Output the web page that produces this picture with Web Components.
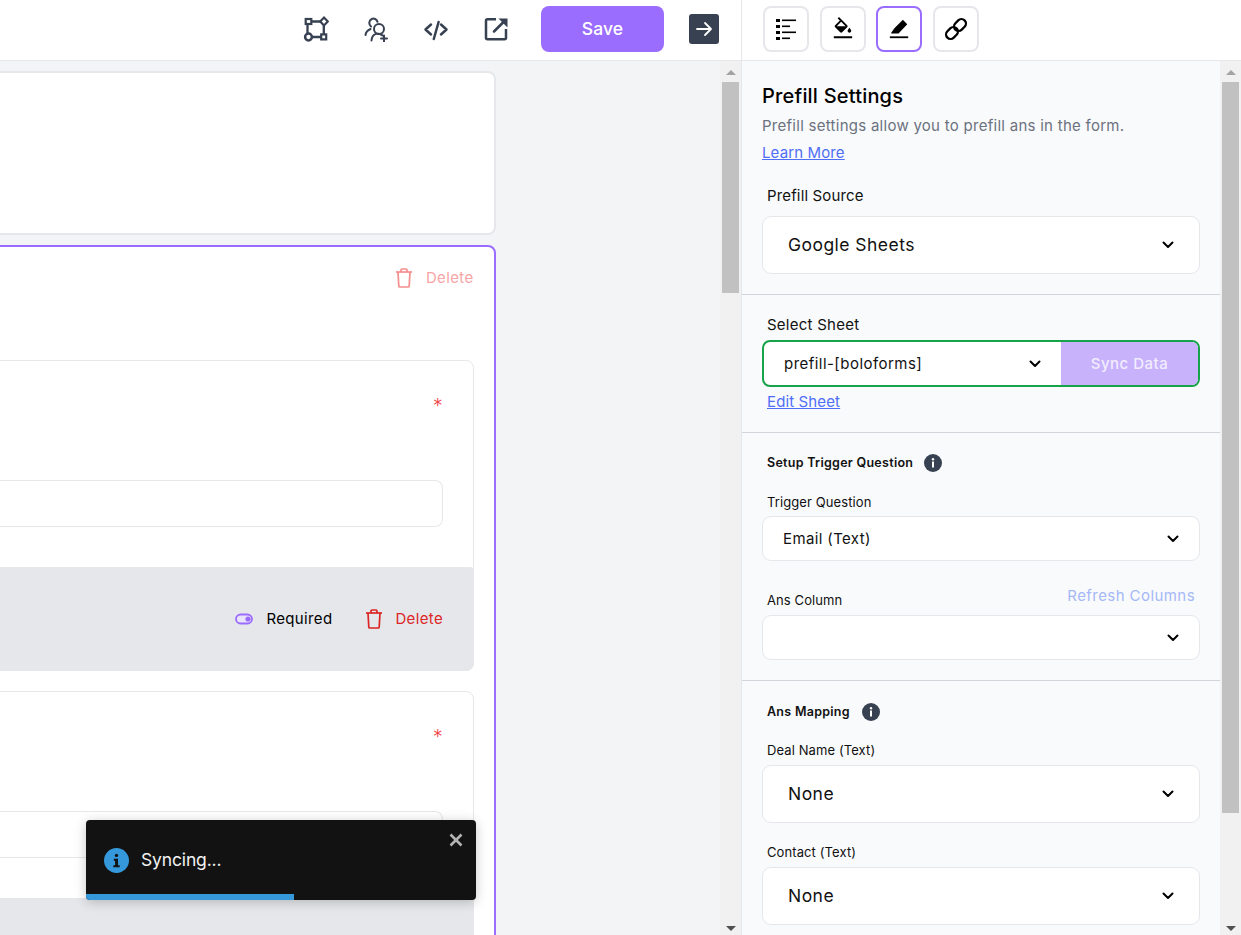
<!DOCTYPE html>
<html lang="en">
<head>
<meta charset="utf-8">
<title>Prefill Settings</title>
<style>
html,body{margin:0;height:100%;overflow:hidden;background:#fff}
body{font-family:Inter,"Open Sans",sans-serif;color:#000}
</style>
</head>
<body>
<app-shell>
  <top-bar slot="top"></top-bar>
  <builder-canvas slot="left"></builder-canvas>
  <settings-panel slot="right"></settings-panel>
</app-shell>
<script>
const chevron = `<svg width="12" height="8" viewBox="0 0 12 8" fill="none" stroke="#000" stroke-width="2" stroke-linecap="round" stroke-linejoin="round"><path d="M1.500 1.500 6 6l4.500-4.500"/></svg>`;
const trash = c => `<svg width="18" height="20" viewBox="0 0 18 20" fill="none" stroke="${c}" stroke-width="1.700" stroke-linejoin="round"><path d="M1 4h16"/><path d="M6 4V2a1 1 0 0 1 1-1h4a1 1 0 0 1 1 1v2"/><path d="M3 4l.8 14a1 1 0 0 0 1 1h8.400a1 1 0 0 0 1-1L15 4"/></svg>`;
function def(name, css, html){
  class C extends HTMLElement{
    constructor(){super();this.attachShadow({mode:'open'});
      this.shadowRoot.innerHTML=`<style>${css}</style>`+html;}
  }
  customElements.define(name,C);
}

def('app-shell',`
  :host{display:flex;flex-direction:column;width:1241px;height:935px;overflow:hidden}
  .top{flex:none}
  .main{flex:1;display:flex;min-height:0}
  .left{flex:none;width:742px;display:flex}
  .right{flex:none;width:499px;display:flex}
`,`<div class="top"><slot name="top"></slot></div>
<div class="main"><div class="left"><slot name="left"></slot></div><div class="right"><slot name="right"></slot></div></div>`);

def('icon-tool',`
  :host{display:flex;width:46px;height:46px;box-sizing:border-box;border:2px solid #e5e7eb;border-radius:8px;align-items:center;justify-content:center;background:#fff}
  :host([active]){border-color:#9b6dff}
`,`<slot></slot>`);

def('top-bar',`
  :host{display:flex;height:61px;box-sizing:border-box;border-bottom:1px solid #e5e7eb;background:#fff}
  .l{width:742px;box-sizing:border-box;border-right:1px solid #e5e7eb;display:flex;align-items:center;justify-content:flex-end;padding:0 22px 2px 0}
  .ic{display:flex;width:60px;justify-content:center;flex:none}
  .ics{display:flex;margin-right:15px}
  .save{width:123px;height:46px;border-radius:8px;background:#9b6dff;color:#fff;font:500 17.500px/46px Inter,sans-serif;text-align:center;margin-right:25px;letter-spacing:.1px}
  .go{width:30px;height:30px;border-radius:3px;background:#374151;display:flex;align-items:center;justify-content:center}
  .r{display:flex;padding:6px 0 0 21px;gap:11px}
  .r icon-tool:nth-child(3){margin-left:-1px}
  svg{display:block}
`,`<div class="l">
  <div class="ics">
    <div class="ic"><svg width="26" height="26" viewBox="0 0 26 26" fill="none" stroke="#374151" stroke-width="2.300"><rect x="2.700" y="3" width="5.600" height="5" stroke-width="2.200"/><path d="M21 1.600 24.800 5.500 21 9.400 17.200 5.500z" stroke-width="2.200"/><circle cx="5.500" cy="21" r="3.400" stroke-width="2.500"/><rect x="18.200" y="18.400" width="5" height="5" stroke-width="2.200"/><path d="M8.300 5.500h9M4.500 8v9.500M20.800 9v9.500M9 21h9"/></svg></div>
    <div class="ic"><svg width="26" height="26" viewBox="0 0 26 26" fill="none" stroke="#374151" stroke-width="2" stroke-linecap="round"><circle cx="16" cy="13" r="5"/><path d="M14.500 5.800C13.500 3 11 2 8.800 3 5.800 4.300 5.500 8.300 8 10.500M2.500 19c.4-3 2.500-5 5-6M8.500 24.500c.3-3.500 2-5.800 4.500-6.600 2.500-.6 5 0 6.500 1.600M21 19.500v6M18 22.500h6"/></svg></div>
    <div class="ic"><svg width="26" height="26" viewBox="0 0 26 26" fill="none" stroke="#374151" stroke-width="2.500" stroke-linecap="round" stroke-linejoin="round"><path d="M8 8.500 2.500 13.500 8 18.500M18 8.500 23.500 13.500 18 18.500M15.600 6 10.800 23"/></svg></div>
    <div class="ic"><svg width="26" height="26" viewBox="0 0 26 26" fill="none" stroke="#374151" stroke-width="2.500" stroke-linejoin="round"><path d="M13 3.300H4.500A1.500 1.500 0 0 0 3 4.800V21.800A1.500 1.500 0 0 0 4.500 23.300H21.500A1.500 1.500 0 0 0 23 21.800V13"/><path d="M11 15.500 22 4.500" stroke-linecap="round"/><path d="M15.500 2.500H24.500V11.500z" fill="#374151" stroke="none"/></svg></div>
  </div>
  <div class="save">Save</div>
  <div class="go"><svg width="18" height="16" viewBox="0 0 18 16" fill="none" stroke="#fff" stroke-width="1.800" stroke-linecap="round" stroke-linejoin="round"><path d="M2 8h14M10 2l6 6-6 6"/></svg></div>
</div>
<div class="r">
  <icon-tool><svg width="22" height="24" viewBox="0 0 22 24"><g fill="#000"><rect x="1" y="2" width="4" height="3"/><rect x="1" y="8" width="4" height="3"/><rect x="1" y="14" width="4" height="3"/><rect x="1" y="20" width="4" height="3"/><rect x="7" y="2.500" width="14" height="1.600"/><rect x="7" y="8.500" width="8" height="1.600"/><rect x="7" y="14.500" width="14" height="1.600"/><rect x="7" y="20.500" width="8" height="1.600"/></g></svg></icon-tool>
  <icon-tool><svg width="22" height="24" viewBox="0 0 24 26"><path d="M16.560 8.940 7.620 0 6.210 1.410l2.380 2.380-5.150 5.150c-.59.590-.59 1.540 0 2.120l5.500 5.500c.29.290.68.440 1.060.44s.77-.15 1.060-.44l5.500-5.500c.59-.58.59-1.530 0-2.120zM5.210 10 10 5.210 14.790 10H5.210zM19 11.500s-2 2.170-2 3.500c0 1.100.9 2 2 2s2-.9 2-2c0-1.330-2-3.500-2-3.500zM2 21h20v2H2z"/></svg></icon-tool>
  <icon-tool active><svg width="22" height="24" viewBox="0 0 24 26"><path d="M16.200 3 21 7.800 11.500 18H3.500V17L7 12.300z"/><path d="M2 21h20v2H2z"/></svg></icon-tool>
  <icon-tool><svg width="24" height="24" viewBox="0 0 24 24" fill="none" stroke="#000" stroke-width="2.300"><rect x="1.500" y="11.500" width="13" height="9" rx="4.500" transform="rotate(-45 8 16)"/><rect x="9.500" y="3.500" width="13" height="9" rx="4.500" transform="rotate(-45 16 8)"/></svg></icon-tool>
</div>`);

def('scroll-track',`
  :host{display:flex;flex:none;width:21px;height:874px;box-sizing:border-box;flex-direction:column;align-items:center;background:#f1f1f1;padding:9px 0 4px 0;overflow:hidden}
  .up{width:0;height:0;border:5px solid transparent;border-top:0;border-bottom:5px solid #a3a3a3;flex:none}
  .thumb{width:17px;flex:none;background:#c1c1c1;margin:7px 0 0 2px;height:var(--h,200px);align-self:flex-start}
  .down{margin-top:auto;width:0;height:0;border:5px solid transparent;border-bottom:0;border-top:5px solid #505050;flex:none}
`,`<div class="up"></div><div class="thumb"></div><div class="down"></div>`);

def('question-card',`
  :host{display:block;box-sizing:border-box;border:1px solid #e5e7eb;border-radius:8px;background:#fff;margin-top:var(--mt,0)}
  .star{height:20px;margin-top:32px;text-align:right;padding-right:31px;color:#ef4444;font:400 17px/24px "DejaVu Sans",sans-serif}
  .input{height:47px;box-sizing:border-box;border:1px solid #e5e7eb;border-radius:0 8px 8px 0;margin:67px 30px 0 0;border-left:0}
  .foot{margin:40px -1px -1px 0;height:104px;background:#e5e7eb;border-radius:0 4px 8px 0;display:flex;align-items:center;justify-content:flex-end;padding-right:31px;box-sizing:border-box;font:400 15px/20px Inter,sans-serif;letter-spacing:.35px}
  :host([folded]) .foot > *{display:none}
  .tg{display:flex;margin-right:13px}
  .req{margin-right:33px}
  .tr{display:flex;margin-right:12px}
  .del{color:#dc2626}
  svg{display:block}
`,`<div class="star">*</div><div class="input"></div>
<div class="foot">
 <span class="tg"><svg width="18" height="12" viewBox="0 0 18 12"><rect x="1" y="1.500" width="16" height="9" rx="4.500" fill="#e9e3fb" stroke="#9b6dff" stroke-width="1.800"/><circle cx="13" cy="6" r="2.600" fill="#9b6dff"/></svg></span>
 <span class="req">Required</span>
 <span class="tr">${trash('#dc2626')}</span>
 <span class="del">Delete</span>
</div>`);

def('toast-note',`
  :host{position:absolute;left:86px;bottom:35px;width:390px;height:80px;background:#121212;border-radius:4px;box-shadow:0 2px 12px rgba(0,0,0,.22);overflow:hidden;display:flex;align-items:center;box-sizing:border-box;padding:0 0 0 18px;color:#f2f2f2}
  .ic{display:flex;margin-right:12px}
  .t{font:400 17.500px/26px Inter,sans-serif;letter-spacing:-.15px}
  .x{position:absolute;right:13px;top:13px;display:flex}
  .bar{position:absolute;left:0;bottom:0;height:6px;width:208px;background:#3498db}
  svg{display:block}
`,`<span class="ic"><svg width="25" height="25" viewBox="0 0 25 25"><circle cx="12.500" cy="12.500" r="12.500" fill="#3498db"/><circle cx="12.500" cy="7.400" r="1.700" fill="#121212"/><path d="M9.800 10.800h4.200v6.500h1.700v1.900H9.300v-1.900h1.800v-4.600H9.800z" fill="#121212"/></svg></span>
<span class="t">Syncing...</span>
<span class="x"><svg width="14" height="14" viewBox="0 0 14 14" fill="none" stroke="#b4b4b4" stroke-width="2.600"><path d="M1.500 1.500l11 11M12.500 1.500l-11 11"/></svg></span>
<div class="bar"></div>`);

def('builder-canvas',`
  :host{display:flex;width:742px;height:874px;box-sizing:border-box;background:#f3f4f6;border-right:1px solid #e5e7eb;position:relative;overflow:hidden}
  .view{flex:none;width:720px;overflow:hidden;padding-top:10px;box-sizing:border-box}
  .col{width:516px;margin-left:-20px;display:flex;flex-direction:column;gap:10px}
  .card1{height:164px;box-sizing:border-box;border:2px solid #e5e7eb;border-radius:8px;background:#fff;flex:none}
  .card2{box-sizing:border-box;border:2px solid #9b6dff;border-radius:8px;background:#fff;padding:21px 20px 0 0;height:800px;flex:none}
  .delrow{display:flex;justify-content:flex-end;align-items:center;height:20px;margin-bottom:72px;padding-right:.5px;font:400 15px/20px Inter,sans-serif;letter-spacing:.35px;color:#f8a5a5}
  .delrow span{display:flex;margin-right:12.500px}
  svg{display:block}
  scroll-track{--h:211px}
`,`<div class="view"><div class="col">
  <div class="card1"></div>
  <div class="card2">
    <div class="delrow"><span>${trash('#f58f8f')}</span>Delete</div>
    <question-card></question-card>
    <question-card folded style="--mt:20px"></question-card>
  </div>
</div></div>
<scroll-track></scroll-track>
<toast-note></toast-note>`);

def('field-select',`
  :host{display:flex;box-sizing:border-box;height:var(--h,45px);background:#fff;border:1px solid #e5e7eb;border-radius:9px;align-items:center;justify-content:space-between;padding:0 var(--pr,20px) 0 var(--pl,20px);font:400 var(--fs,15px)/24px Inter,sans-serif;letter-spacing:var(--ls,.38px);color:#111}
  svg{display:block;flex:none}
`,`<span><slot></slot></span>${chevron}`);

def('panel-section',`
  :host{display:block;box-sizing:border-box;padding:var(--pt,20px) 20px var(--pb,20px);border-bottom:1px solid #d1d5db}
  :host([last]){border-bottom:0}
`,`<slot></slot>`);

def('info-dot',`
  :host{display:inline-flex;width:18px;height:18px}
  svg{display:block}
`,`<svg width="18" height="18" viewBox="0 0 18 18"><circle cx="9" cy="9" r="9" fill="#374151"/><rect x="8" y="7.500" width="2" height="6" fill="#fff"/><circle cx="9" cy="5.300" r="1.200" fill="#fff"/></svg>`);

def('settings-panel',`
  :host{display:flex;width:499px;height:874px;background:#f9fafb;overflow:hidden}
  .body{flex:none;width:478px;height:874px;overflow:hidden}
  h2{margin:0;font:500 20px/30px Inter,sans-serif;letter-spacing:.2px;color:#000}
  .desc{margin:5px 0 0;font:400 15px/20px Inter,sans-serif;letter-spacing:.27px;color:#6b7280}
  a{display:block;color:#4f6ef7;text-decoration:underline;font:400 15px/20px Inter,sans-serif;letter-spacing:.13px;width:max-content}
  .lm{margin-top:7px}
  .lab{margin:0 0 0 5px;font:400 15px/20px Inter,sans-serif;letter-spacing:.15px;color:#111}
  .lab.sh{letter-spacing:.25px}
  .lab.s{font-size:13px;line-height:18px;letter-spacing:.1px}
  .hd{display:flex;align-items:center;margin-left:5px;font:600 12.500px/20px Inter,sans-serif;letter-spacing:.28px;color:#111}
  .sync{display:flex;height:47px;box-sizing:border-box;border:2px solid #16a34a;border-radius:8px;overflow:hidden;background:#fff;margin-top:5px}
  .sel{flex:1;display:flex;align-items:center;justify-content:space-between;padding:0 20px 0 20px;font:400 15px/24px Inter,sans-serif;letter-spacing:.46px;color:#111}
  .btn{flex:none;width:137px;background:#c7b2fb;color:#f2edff;font:500 15px/43px Inter,sans-serif;letter-spacing:.5px;text-align:center}
  .ansrow{display:flex;justify-content:space-between;margin-top:25px;height:29px}
  .ansrow .lab{margin-top:5px}
  .refresh{color:#a5b8f8;font:400 15px/20px Inter,sans-serif;letter-spacing:.43px;margin-right:5px}
  .big{--h:58px;--pl:25px;--pr:25px;--fs:17.500px;--ls:.46px}
  svg{display:block}
`,`<div class="body">
  <panel-section>
    <h2>Prefill Settings</h2>
    <p class="desc">Prefill settings allow you to prefill ans in the form.</p>
    <a class="lm">Learn More</a>
    <p class="lab" style="margin-top:23px;margin-bottom:10px">Prefill Source</p>
    <field-select class="big">Google Sheets</field-select>
  </panel-section>
  <panel-section>
    <p class="lab sh">Select Sheet</p>
    <div class="sync">
      <div class="sel"><span>prefill-[boloforms]</span>${chevron}</div>
      <div class="btn">Sync Data</div>
    </div>
    <a style="margin:5px 0 0 5px">Edit Sheet</a>
  </panel-section>
  <panel-section>
    <div class="hd">Setup Trigger Question<info-dot style="margin-left:11px"></info-dot></div>
    <p class="lab s" style="margin-top:20px;margin-bottom:5px">Trigger Question</p>
    <field-select>Email (Text)</field-select>
    <div class="ansrow"><p class="lab s">Ans Column</p><span class="refresh">Refresh Columns</span></div>
    <field-select></field-select>
  </panel-section>
  <panel-section last style="--pt:21px">
    <div class="hd">Ans Mapping<info-dot style="margin-left:12px"></info-dot></div>
    <p class="lab s" style="margin-top:19px;margin-bottom:6px">Deal Name (Text)</p>
    <field-select class="big">None</field-select>
    <p class="lab s" style="margin-top:20px;margin-bottom:6px">Contact (Text)</p>
    <field-select class="big">None</field-select>
  </panel-section>
</div>
<scroll-track style="--h:731px"></scroll-track>`);
</script>
</body>
</html>
